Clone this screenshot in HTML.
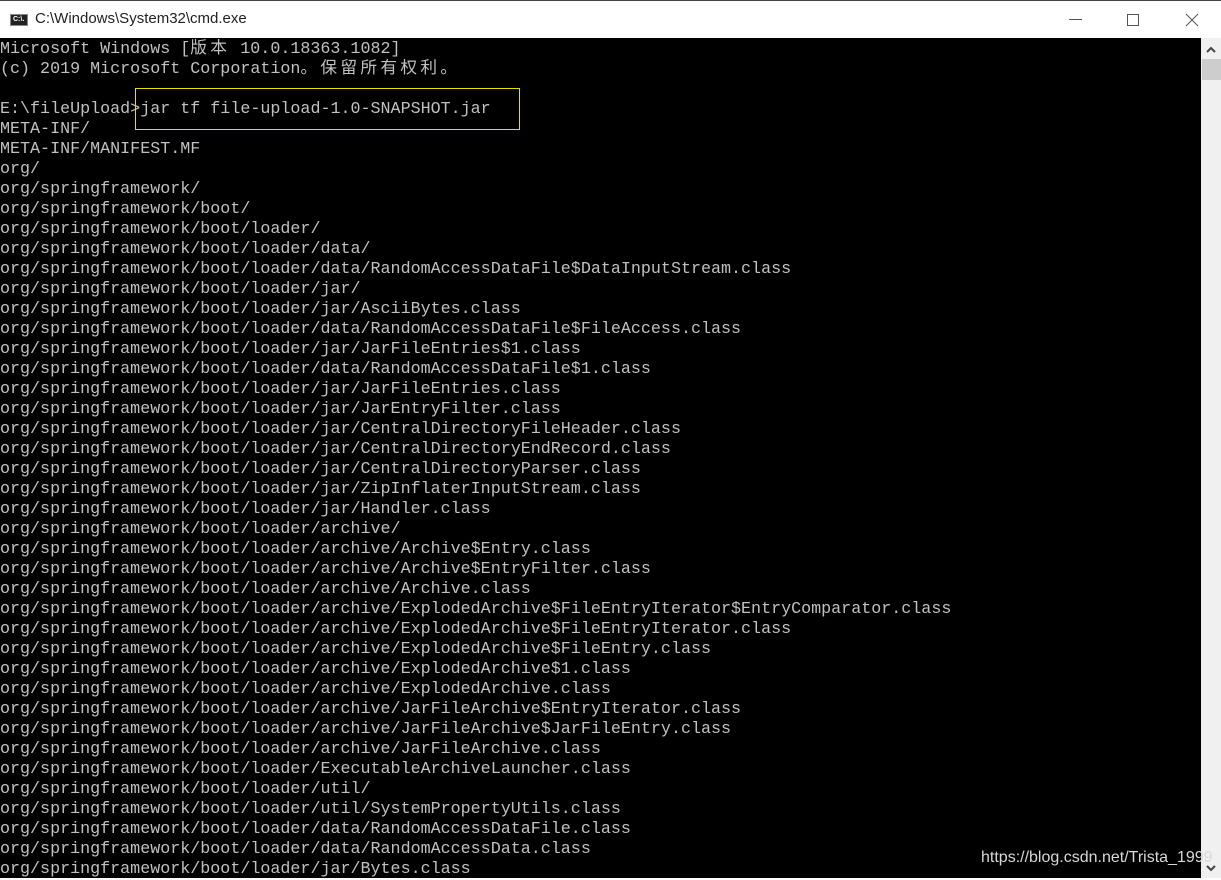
<!DOCTYPE html>
<html><head><meta charset="utf-8"><style>
html,body{margin:0;padding:0;width:1221px;height:878px;overflow:hidden;background:#fff;}
#title{position:absolute;left:0;top:0;width:1221px;height:38px;background:#fff;border-top:1px solid #444;box-sizing:border-box;}
#title .t{position:absolute;left:35px;top:9px;font:15px "Liberation Sans",sans-serif;color:#222;}
#icon{position:absolute;left:10px;top:13px;width:18px;height:12px;background:#222;border:1px solid #888;box-sizing:border-box;}
#icon span{position:absolute;left:2px;top:1px;font:bold 7px "Liberation Sans",sans-serif;color:#fff;}
#term{position:absolute;left:0;top:38px;width:1201px;height:840px;background:#000;}
pre{margin:0;position:absolute;left:0;top:2px;font:16.7px/20px "Liberation Mono","Noto Sans CJK SC",monospace;color:#c0c0c0;}
.c{letter-spacing:3.3px;}
#box{position:absolute;left:135px;top:88px;width:385px;height:42px;border:1px solid #e8e000;box-sizing:border-box;}
#sb{position:absolute;left:1201px;top:38px;width:20px;height:840px;background:#f0f0f0;}
#thumb{position:absolute;left:1px;top:21px;width:19px;height:21px;background:#cdcdcd;}
#wm{position:absolute;left:981px;top:849px;font:16px "Liberation Sans",sans-serif;color:#d8d8d8;}
</style></head><body>
<div id="title"><div id="icon"><span>C:\.</span></div><div class="t">C:\Windows\System32\cmd.exe</div>
<svg style="position:absolute;left:1060px;top:10px" width="150" height="20">
<line x1="9" y1="8.5" x2="22" y2="8.5" stroke="#555" stroke-width="1"/>
<rect x="67.5" y="3.5" width="11" height="11" fill="none" stroke="#555"/>
<line x1="126" y1="3" x2="138" y2="15" stroke="#555"/><line x1="138" y1="3" x2="126" y2="15" stroke="#555"/>
</svg></div>
<div id="term"><pre>Microsoft Windows [<span class="c">版本</span> 10.0.18363.1082]
(c) 2019 Microsoft Corporation<span class="c">。保留所有权利。</span>

E:\fileUpload&gt;jar tf file-upload-1.0-SNAPSHOT.jar
META-INF/
META-INF/MANIFEST.MF
org/
org/springframework/
org/springframework/boot/
org/springframework/boot/loader/
org/springframework/boot/loader/data/
org/springframework/boot/loader/data/RandomAccessDataFile$DataInputStream.class
org/springframework/boot/loader/jar/
org/springframework/boot/loader/jar/AsciiBytes.class
org/springframework/boot/loader/data/RandomAccessDataFile$FileAccess.class
org/springframework/boot/loader/jar/JarFileEntries$1.class
org/springframework/boot/loader/data/RandomAccessDataFile$1.class
org/springframework/boot/loader/jar/JarFileEntries.class
org/springframework/boot/loader/jar/JarEntryFilter.class
org/springframework/boot/loader/jar/CentralDirectoryFileHeader.class
org/springframework/boot/loader/jar/CentralDirectoryEndRecord.class
org/springframework/boot/loader/jar/CentralDirectoryParser.class
org/springframework/boot/loader/jar/ZipInflaterInputStream.class
org/springframework/boot/loader/jar/Handler.class
org/springframework/boot/loader/archive/
org/springframework/boot/loader/archive/Archive$Entry.class
org/springframework/boot/loader/archive/Archive$EntryFilter.class
org/springframework/boot/loader/archive/Archive.class
org/springframework/boot/loader/archive/ExplodedArchive$FileEntryIterator$EntryComparator.class
org/springframework/boot/loader/archive/ExplodedArchive$FileEntryIterator.class
org/springframework/boot/loader/archive/ExplodedArchive$FileEntry.class
org/springframework/boot/loader/archive/ExplodedArchive$1.class
org/springframework/boot/loader/archive/ExplodedArchive.class
org/springframework/boot/loader/archive/JarFileArchive$EntryIterator.class
org/springframework/boot/loader/archive/JarFileArchive$JarFileEntry.class
org/springframework/boot/loader/archive/JarFileArchive.class
org/springframework/boot/loader/ExecutableArchiveLauncher.class
org/springframework/boot/loader/util/
org/springframework/boot/loader/util/SystemPropertyUtils.class
org/springframework/boot/loader/data/RandomAccessDataFile.class
org/springframework/boot/loader/data/RandomAccessData.class
org/springframework/boot/loader/jar/Bytes.class</pre></div>
<div id="box"></div>
<div id="sb"><svg style="position:absolute;left:5px;top:8px" width="10" height="8"><path d="M1 6 L5 2 L9 6" fill="none" stroke="#444" stroke-width="2"/></svg><div id="thumb"></div>
<svg style="position:absolute;left:5px;top:826px" width="10" height="8"><path d="M1 2 L5 6 L9 2" fill="none" stroke="#444" stroke-width="2"/></svg></div>
<div id="wm">https://blog.csdn.net/Trista_1999</div>
</body></html>
